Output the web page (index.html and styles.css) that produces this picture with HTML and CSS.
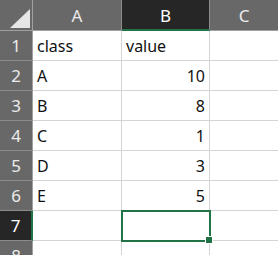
FILE: index.html
```html
<!DOCTYPE html>
<html>
<head>
<meta charset="utf-8">
<link rel="stylesheet" href="styles.css">
</head>
<body>
<div class="sheet">
  <div class="hd corner"><svg class="tri" width="20" height="19" viewBox="0 0 20 19"><polygon points="20,0 20,19 0,19" fill="#e6e6e6"/></svg></div>
  <div class="hd col">A</div>
  <div class="hd col sel-col">B</div>
  <div class="hd col last">C</div>

  <div class="hd row">1</div>
  <div class="c">class</div>
  <div class="c">value</div>
  <div class="c last"></div>

  <div class="hd row">2</div>
  <div class="c">A</div>
  <div class="c num">10</div>
  <div class="c last"></div>

  <div class="hd row">3</div>
  <div class="c">B</div>
  <div class="c num">8</div>
  <div class="c last"></div>

  <div class="hd row">4</div>
  <div class="c">C</div>
  <div class="c num">1</div>
  <div class="c last"></div>

  <div class="hd row">5</div>
  <div class="c">D</div>
  <div class="c num">3</div>
  <div class="c last"></div>

  <div class="hd row">6</div>
  <div class="c">E</div>
  <div class="c num">5</div>
  <div class="c last"></div>

  <div class="hd row sel-row">7</div>
  <div class="c"></div>
  <div class="c active"><span class="handle"></span></div>
  <div class="c last"></div>

  <div class="hd row">8</div>
  <div class="c"></div>
  <div class="c"></div>
  <div class="c last"></div>
</div>
</body>
</html>
```
FILE: styles.css
```css
html, body {
  margin: 0;
  padding: 0;
  background: #ffffff;
  overflow: hidden;
}
.sheet {
  display: grid;
  grid-template-columns: 33px 89px 88px 1fr;
  grid-template-rows: 31px repeat(8, 30px);
  width: 278px;
  font-family: "Noto Sans", "Liberation Sans", sans-serif;
  font-size: 16px;
  color: #111111;
}
.hd {
  background: #686868;
  color: #ececec;
  font-size: 17px;
  display: flex;
  align-items: center;
  justify-content: center;
  box-sizing: border-box;
  border-right: 1px solid #8c8c8c;
  border-bottom: 1px solid #8c8c8c;
}
.corner {
  position: relative;
  border-right: 1px solid #a0a0a0;
  border-bottom: 1px solid #a0a0a0;
}
.tri {
  position: absolute;
  left: 10px;
  top: 9px;
}
.col {
  border-bottom: 1px solid #a0a0a0;
  padding-top: 1px;
}
.col.last { border-right: none; }
.sel-col {
  background: #262626;
  color: #ffffff;
  border-bottom: 2px solid #217346;
}
.row {
  border-right: 1px solid #a0a0a0;
}
.sel-row {
  background: #262626;
  color: #ffffff;
  border-right: 2px solid #217346;
}
.c {
  box-sizing: border-box;
  border-right: 1px solid #d4d4d4;
  border-bottom: 1px solid #d4d4d4;
  display: flex;
  align-items: center;
  padding: 0 4px;
  white-space: nowrap;
}
.c.last { border-right: none; }
.num { justify-content: flex-end; }
.active {
  position: relative;
  outline: 2px solid #217346;
  outline-offset: -1px;
  z-index: 1;
}
.handle {
  position: absolute;
  right: -4px;
  bottom: -4px;
  width: 6px;
  height: 6px;
  background: #217346;
  border: 1px solid #ffffff;
}
```
